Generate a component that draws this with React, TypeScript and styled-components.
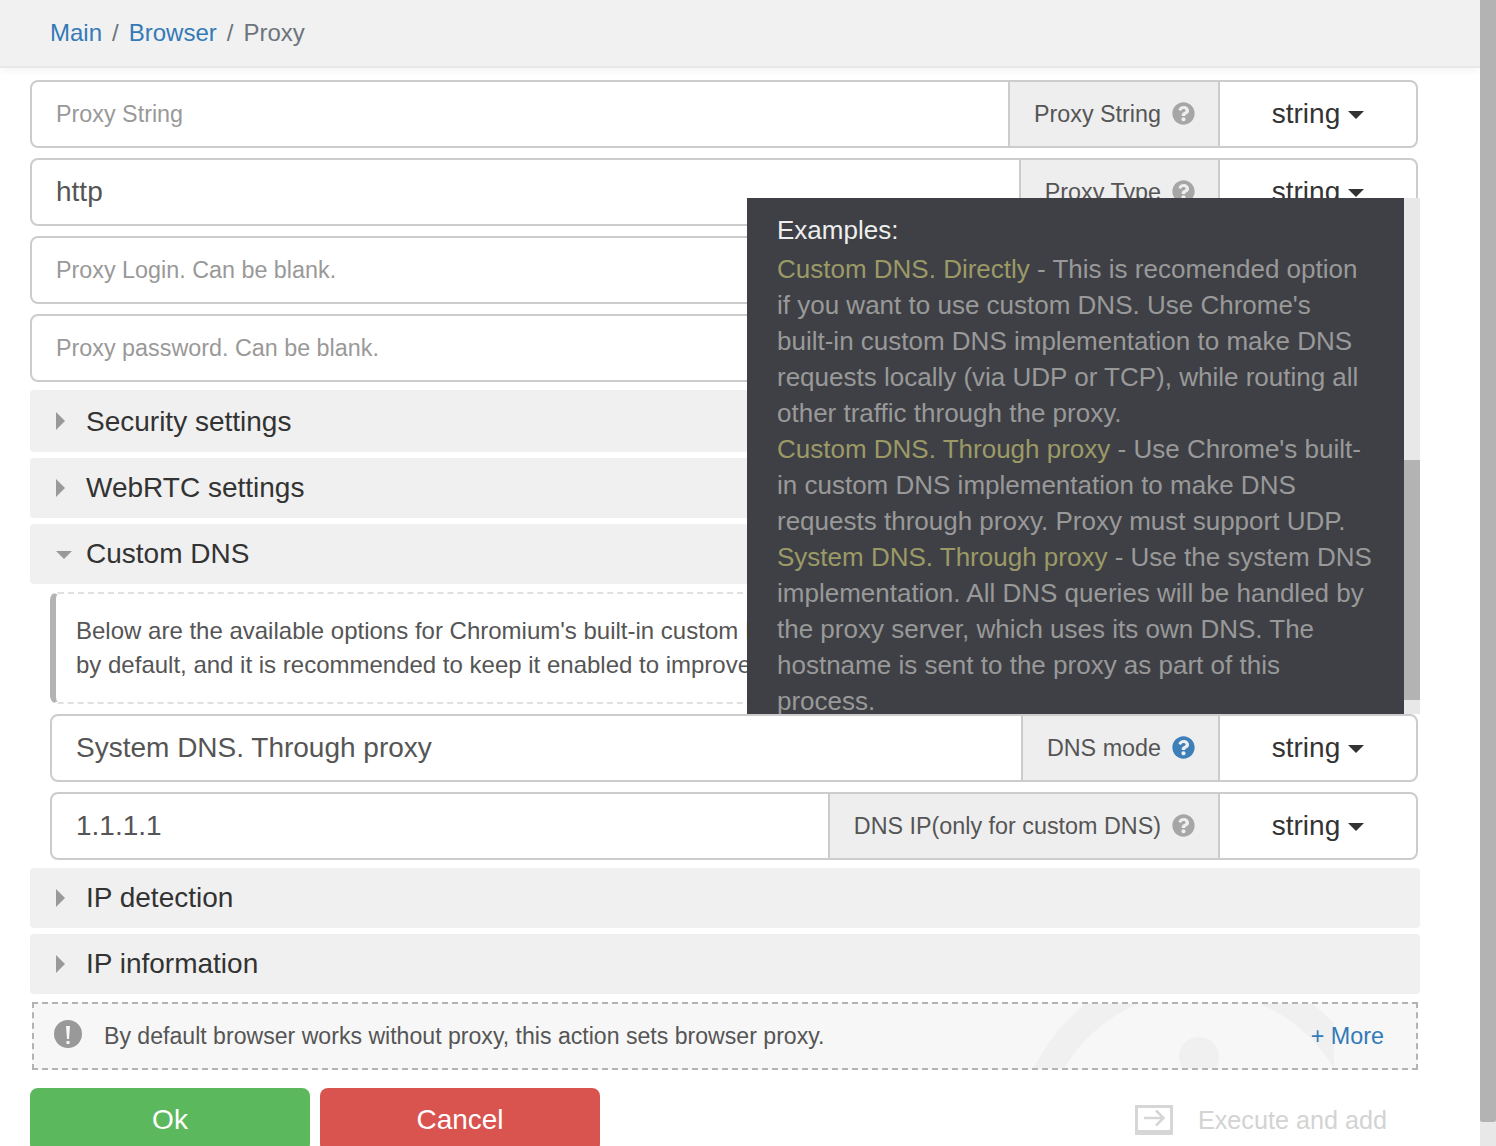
import React from "react";
import styled, { createGlobalStyle } from "styled-components";
import { FaQuestionCircle } from "react-icons/fa";

const Global = createGlobalStyle`
  html, body { margin: 0; padding: 0; height: 1146px; overflow: hidden; background: #fff; }
  body { font-family: "Liberation Sans", Arial, sans-serif; color: #555; }
  * { box-sizing: border-box; }
`;

const Page = styled.div`
  display: flex;
  width: 1496px;
  height: 1146px;
  overflow: hidden;
  position: relative;
`;
const Main = styled.div`
  width: 1480px;
  flex: none;
`;
const PageRail = styled.div`
  width: 16px;
  flex: none;
  background: #e8e8e8;
  display: flex;
  flex-direction: column;
`;
const PageThumb = styled.div`
  height: 1122px;
  background: #b3b3b3;
  border-radius: 0 0 2px 2px;
`;
const Header = styled.header`
  height: 68px;
  background: #f1f1f1;
  border-bottom: 2px solid #e8e8e8;
  box-shadow: 0 2px 8px rgba(0, 0, 0, 0.05);
  display: flex;
  align-items: center;
  padding: 0 0 0 50px;
  font-size: 24px;
  color: #6c757d;
`;
const Crumb = styled.a`
  color: #337ab7;
  text-decoration: none;
`;
const Sep = styled.span`
  color: #6c757d;
  padding: 0 10px;
`;
const Content = styled.div`
  padding: 12px 60px 0 30px;
  display: flex;
  flex-direction: column;
`;
const Row = styled.div<{ $indent?: boolean; $gap?: number }>`
  height: 68px;
  width: ${(p) => (p.$indent ? "1368px" : "1388px")};
  margin-left: ${(p) => (p.$indent ? "20px" : "0")};
  margin-bottom: ${(p) => p.$gap ?? 10}px;
  border: 2px solid #ccc;
  border-radius: 8px;
  display: flex;
  background: #fff;
  overflow: hidden;
`;
const Field = styled.div<{ $placeholder?: boolean }>`
  flex: 1;
  min-width: 0;
  display: flex;
  align-items: center;
  padding: 0 24px;
  font-size: ${(p) => (p.$placeholder ? "23.33px" : "28px")};
  color: ${(p) => (p.$placeholder ? "#999" : "#555")};
  white-space: nowrap;
  overflow: hidden;
`;
const Addon = styled.div`
  flex: none;
  display: flex;
  align-items: center;
  gap: 11px;
  padding: 0 23px 0 24px;
  background: #eee;
  border-left: 2px solid #ccc;
  border-right: 2px solid #ccc;
  font-size: 23.33px;
  color: #555;
  white-space: nowrap;
`;
const Help = styled.span<{ $active?: boolean }>`
  display: inline-flex;
  color: ${(p) => (p.$active ? "#3f7fb9" : "#a6a6a6")};
  font-size: 23px;
  margin-top: -1px;
`;
const TypeButton = styled.div`
  flex: none;
  width: 196px;
  display: flex;
  align-items: center;
  justify-content: center;
  gap: 8px;
  font-size: 28px;
  color: #333;
`;
const Caret = styled.i`
  display: block;
  margin-top: 2px;
  border-top: 8px solid #333;
  border-left: 8px solid transparent;
  border-right: 8px solid transparent;
`;
const Section = styled.div<{ $h?: number; $gap?: number }>`
  height: ${(p) => p.$h ?? 60}px;
  width: 1390px;
  margin-bottom: ${(p) => p.$gap ?? 6}px;
  background: #f0f0f0;
  border-radius: 4px;
  display: flex;
  align-items: center;
  padding-left: 26px;
  font-size: 28px;
  color: #333;
`;
const SectionLabel = styled.span<{ $nudge?: boolean }>`
  margin-top: ${(p) => (p.$nudge ? "2px" : "0")};
`;
const ArrowBox = styled.span`
  width: 30px;
  flex: none;
  display: flex;
  align-items: center;
`;
const ArrowRight = styled.i`
  display: block;
  border-left: 9px solid #999;
  border-top: 9px solid transparent;
  border-bottom: 9px solid transparent;
`;
const ArrowDown = styled.i`
  display: block;
  border-top: 8px solid #999;
  border-left: 8px solid transparent;
  border-right: 8px solid transparent;
  margin-top: 2px;
`;
const Callout = styled.div`
  margin: 2px 0 10px 20px;
  width: 1368px;
  height: 112px;
  border: 2px dashed #e0e0e0;
  border-left: 6px solid #b3b3b3;
  border-radius: 8px;
  padding: 20px 20px 0 20px;
  font-size: 24px;
  line-height: 34px;
  color: #555;
  white-space: nowrap;
  overflow: hidden;
`;
const Orange = styled.span`
  color: #f0ad4e;
`;
const Note = styled.div`
  position: relative;
  margin: 2px 0 18px 2px;
  width: 1386px;
  height: 68px;
  border: 2px dashed #b3b3b3;
  background: #f7f7f7;
  display: flex;
  align-items: center;
  padding: 0 32px 0 20px;
  font-size: 23.1px;
  color: #555;
  overflow: hidden;
`;
const NoteIcon = styled.svg`
  width: 28px;
  height: 28px;
  flex: none;
  margin-right: 22px;
  margin-top: -4px;
  position: relative;
`;
const NoteText = styled.span`
  flex: 1;
  position: relative;
`;
const More = styled.a`
  color: #337ab7;
  font-size: 23.33px;
  position: relative;
  text-decoration: none;
`;
const Watermark = styled.svg`
  position: absolute;
  left: 900px;
  top: -2px;
  width: 400px;
  height: 68px;
`;
const Actions = styled.div`
  display: flex;
  align-items: flex-start;
  gap: 10px;
  width: 1388px;
`;
const Btn = styled.div<{ $bg: string }>`
  width: 280px;
  height: 64px;
  flex: none;
  background: ${(p) => p.$bg};
  border-radius: 8px;
  color: #fff;
  font-size: 28px;
  display: flex;
  align-items: center;
  justify-content: center;
`;
const Execute = styled.div`
  margin-left: auto;
  height: 64px;
  display: flex;
  align-items: center;
  gap: 25px;
  padding-right: 31px;
  font-size: 25.2px;
  color: #d3d3d3;
`;
const Tip = styled.div`
  position: absolute;
  left: 747px;
  top: 198px;
  width: 673px;
  height: 516px;
  display: flex;
`;
const TipBody = styled.div`
  width: 657px;
  flex: none;
  background: #3f4045;
  color: #999;
  font-size: 26px;
  line-height: 36px;
  padding: 14px 30px 0;
  overflow: hidden;
`;
const TipTitle = styled.div`
  color: #eee;
  margin-bottom: 3px;
`;
const TipHi = styled.span`
  color: #9b9a66;
`;
const TipRail = styled.div`
  flex: 1;
  background: #e8e8e8;
  padding: 262px 0 14px;
  display: flex;
`;
const TipThumb = styled.div`
  flex: 1;
  background: #b3b3b3;
`;

const Q = ({ active }: { active?: boolean }) => (
  <Help $active={active}>
    <FaQuestionCircle />
  </Help>
);

const InputRow = ({
  value,
  placeholder,
  label,
  active,
  indent,
  gap,
}: {
  value?: string;
  placeholder?: string;
  label: string;
  active?: boolean;
  indent?: boolean;
  gap?: number;
}) => (
  <Row $indent={indent} $gap={gap}>
    <Field $placeholder={!!placeholder}>{value ?? placeholder}</Field>
    <Addon>
      {label}
      <Q active={active} />
    </Addon>
    <TypeButton>
      string
      <Caret />
    </TypeButton>
  </Row>
);

export default function App() {
  return (
    <Page>
      <Global />
      <Main>
        <Header>
          <Crumb>Main</Crumb>
          <Sep>/</Sep>
          <Crumb>Browser</Crumb>
          <Sep>/</Sep>
          Proxy
        </Header>
        <Content>
          <InputRow placeholder="Proxy String" label="Proxy String" />
          <InputRow value="http" label="Proxy Type" />
          <InputRow placeholder="Proxy Login. Can be blank." label="Proxy Login" />
          <InputRow placeholder="Proxy password. Can be blank." label="Proxy Password" gap={8} />
          <Section $h={62}>
            <ArrowBox>
              <ArrowRight />
            </ArrowBox>
            <SectionLabel $nudge>Security settings</SectionLabel>
          </Section>
          <Section>
            <ArrowBox>
              <ArrowRight />
            </ArrowBox>
            <SectionLabel>WebRTC settings</SectionLabel>
          </Section>
          <Section>
            <ArrowBox>
              <ArrowDown />
            </ArrowBox>
            <SectionLabel>Custom DNS</SectionLabel>
          </Section>
          <Callout>
            Below are the available options for Chromium's built-in custom <Orange>DNS</Orange>
            <br />
            by default, and it is recommended to keep it enabled to improve
          </Callout>
          <InputRow indent value="System DNS. Through proxy" label="DNS mode" active />
          <Row $indent $gap={8}>
            <Field>1.1.1.1</Field>
            <Addon>
              DNS IP(only for custom DNS)
              <Q />
            </Addon>
            <TypeButton>
              string
              <Caret />
            </TypeButton>
          </Row>
          <Section>
            <ArrowBox>
              <ArrowRight />
            </ArrowBox>
            <SectionLabel>IP detection</SectionLabel>
          </Section>
          <Section>
            <ArrowBox>
              <ArrowRight />
            </ArrowBox>
            <SectionLabel>IP information</SectionLabel>
          </Section>
          <Note>
            <Watermark viewBox="0 0 400 68">
              <circle cx="265" cy="146" r="170" fill="none" stroke="#f0f0f0" strokeWidth="27" />
              <circle cx="265" cy="55" r="20" fill="#f0f0f0" />
            </Watermark>
            <NoteIcon viewBox="0 0 28 28">
              <circle cx="14" cy="14" r="14" fill="#999" />
              <path d="M12 6H16L15 19H13Z" fill="#f7f7f7" />
              <rect x="12.5" y="21" width="3" height="3" fill="#f7f7f7" />
            </NoteIcon>
            <NoteText>By default browser works without proxy, this action sets browser proxy.</NoteText>
            <More>+ More</More>
          </Note>
          <Actions>
            <Btn $bg="#5cb85c">Ok</Btn>
            <Btn $bg="#d9534f">Cancel</Btn>
            <Execute>
              <svg width="38" height="30" viewBox="0 0 38 30">
                <path d="M0 0H38V30H0ZM3 3V25H35V3Z" fill="#d6d6d6" fillRule="evenodd" />
                <path d="M9 13H28M21 5.5L28.5 13L21 20.5" fill="none" stroke="#d6d6d6" strokeWidth="2.5" />
              </svg>
              Execute and add
            </Execute>
          </Actions>
        </Content>
      </Main>
      <PageRail>
        <PageThumb />
      </PageRail>
      <Tip>
        <TipBody>
          <TipTitle>Examples:</TipTitle>
          <TipHi>Custom DNS. Directly</TipHi> - This is recomended option if you want to use custom DNS. Use
          Chrome's built-in custom DNS implementation to make DNS requests locally (via UDP or TCP), while
          routing all other traffic through the proxy.
          <br />
          <TipHi>Custom DNS. Through proxy</TipHi> - Use Chrome's built-in custom DNS implementation to make
          DNS requests through proxy. Proxy must support UDP.
          <br />
          <TipHi>System DNS. Through proxy</TipHi> - Use the system DNS implementation. All DNS queries will
          be handled by the proxy server, which uses its own DNS. The hostname is sent to the proxy as part
          of this process.
        </TipBody>
        <TipRail>
          <TipThumb />
        </TipRail>
      </Tip>
    </Page>
  );
}
